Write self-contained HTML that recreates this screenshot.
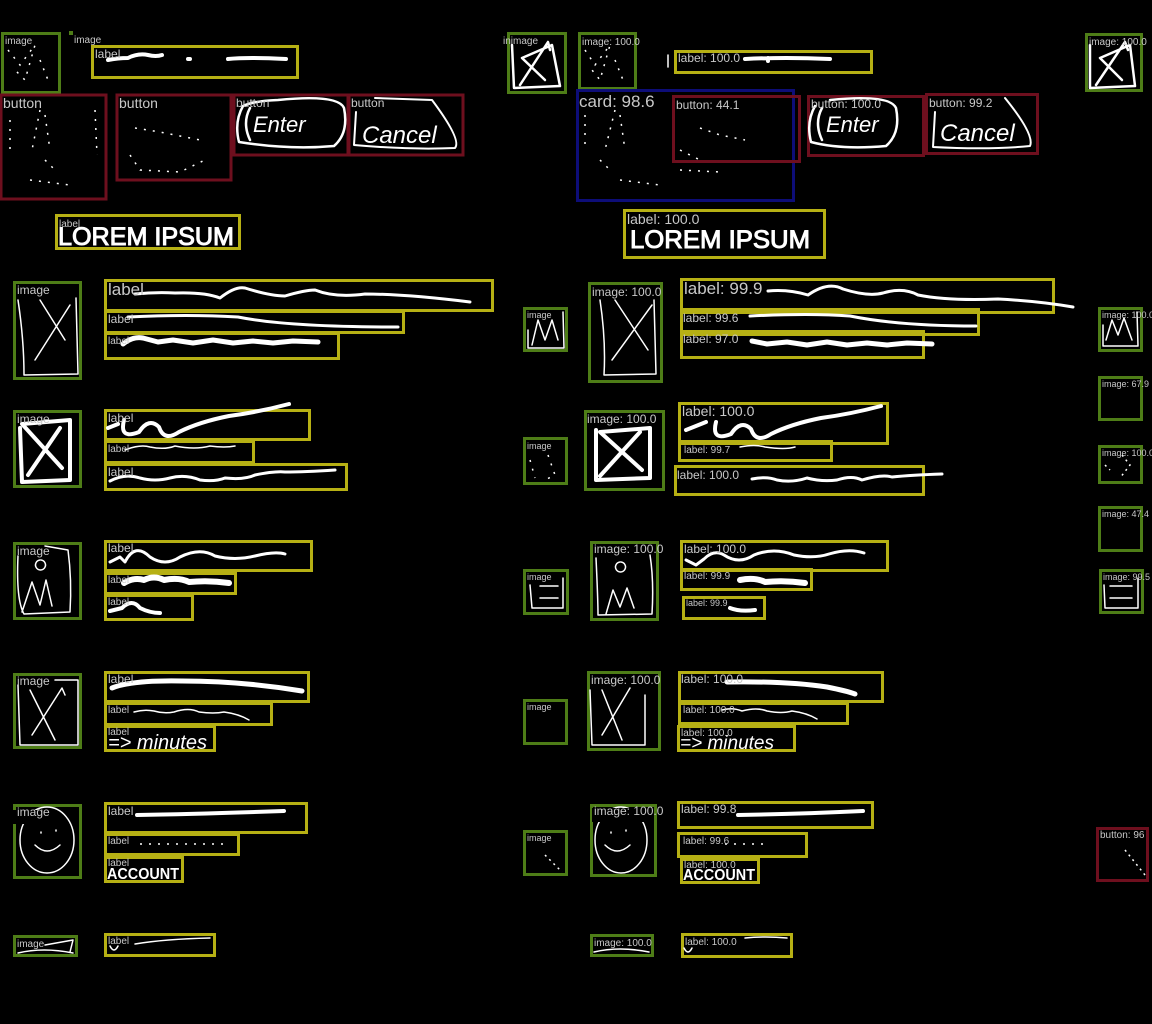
<!DOCTYPE html>
<html><head><meta charset="utf-8"><style>
html,body{margin:0;padding:0;background:#000;width:1152px;height:1024px;overflow:hidden}
svg{display:block}
.g{fill:none;stroke:#4e7d17;stroke-width:3}
.y{fill:none;stroke:#b6b014;stroke-width:3}
.r{fill:none;stroke:#6e0f1e;stroke-width:3}
.b{fill:none;stroke:#0d0d78;stroke-width:3}
.w{fill:none;stroke:#fff;stroke-width:3;stroke-linecap:round;stroke-linejoin:round}
.t{fill:none;stroke:#fff;stroke-width:1.5;stroke-linecap:round;stroke-linejoin:round}
.d{fill:none;stroke:#fff;stroke-width:1.5;stroke-dasharray:2 7}
text{font-family:"Liberation Sans","DejaVu Sans",sans-serif;fill:#c8c8c8}
.s{font-size:10px}.m{font-size:12px}.l{font-size:14px}.xl{font-size:17px}
.hw{font-family:"Liberation Sans",sans-serif;fill:#fff}
.lor{font-family:"Liberation Sans",sans-serif;fill:#fff;stroke:#fff;stroke-width:1;font-size:25px}
</style></head><body>
<svg width="1152" height="1024" viewBox="0 0 1152 1024" xmlns="http://www.w3.org/2000/svg">
<!-- ===== LEFT COLUMN ===== -->
<rect class="g" x="2.5" y="33.5" width="57" height="59"/>
<path class="d" d="M8 50 L20 65 L35 45 L25 80 L15 70 M40 60 L50 85"/>
<text class="s" x="5" y="44">image</text>
<rect x="69" y="31" width="4" height="4" fill="#4e7d17"/>
<text class="s" x="74" y="43">image</text>
<rect class="y" x="92.5" y="46.5" width="205" height="31"/>
<path class="w" d="M108 60 q10 -2 20 -2 q10 -5 20 -3 q8 2 14 0 M188 59 l2 0 M228 59 q20 -2 58 0" style="stroke-width:4"/>
<text class="m" x="95" y="58">label</text>

<rect class="r" x="1" y="95" width="105" height="104"/>
<path class="d" d="M10 120 L10 150 M40 110 L32 150 M45 115 L50 150 M95 110 L97 155 M30 180 L70 185 M45 160 L55 170"/>
<text class="l" x="3" y="108">button</text>
<rect class="r" x="117" y="95" width="114" height="85"/>
<path class="d" d="M135 128 L160 132 L200 140 M130 155 L140 170 L180 172 L205 160"/>
<text class="l" x="119" y="108">button</text>
<rect class="r" x="234" y="95" width="114" height="60"/>
<path class="w" d="M278 100 q60 -6 66 8 q5 25 -10 38 q-45 4 -95 -4 q-5 -20 4 -36 q10 -5 35 -6 M250 108 q-8 15 0 32" style="stroke-width:2.5"/>
<text class="hw" x="253" y="132" style="font-size:22px;font-style:italic">Enter</text>
<text class="m" x="236" y="107">button</text>
<rect class="r" x="349" y="95" width="114" height="60"/>
<path class="t" d="M356 112 L354 145 Q410 150 455 148 Q462 140 432 100 L375 98" style="stroke-width:2"/>
<text x="362" y="143" style="font-size:24px;fill:#fff;font-style:italic">Cancel</text>
<text class="m" x="351" y="107">button</text>

<rect class="y" x="56.5" y="215.5" width="183" height="33"/>
<text class="lor" x="58" y="245" textLength="176" lengthAdjust="spacingAndGlyphs">LOREM IPSUM</text>
<text class="s" x="59" y="227">label</text>

<!-- row 1 -->
<rect class="g" x="14.5" y="282.5" width="66" height="96"/>
<path class="t" d="M18 300 Q24 340 24 375 L78 374 L76 298 M40 300 L65 340 M70 305 L35 360"/>
<text class="m" x="17" y="294">image</text>
<rect class="y" x="105.5" y="280.5" width="387" height="30"/>
<path class="w" d="M135 294 q20 -2 40 -1 q30 -1 45 5 q15 -12 25 -10 q25 8 40 8 q20 -6 30 -6 q20 8 50 4 q40 0 105 8"/>
<text class="xl" x="108" y="295">label</text>
<rect class="y" x="105.5" y="311.5" width="298" height="21"/>
<path class="w" d="M128 317 q60 -3 110 0 q50 10 160 10"/>
<text class="m" x="108" y="323">label</text>
<rect class="y" x="105.5" y="333.5" width="233" height="25"/>
<path class="w" d="M123 344 q10 -8 20 -6 l15 4 l15 -2 l20 3 l20 -3 l20 3 l20 -2 l20 2 l20 -2 l25 1" style="stroke-width:5"/>
<text class="s" x="108" y="344">label</text>

<!-- row 2 -->
<rect class="g" x="14.5" y="411.5" width="66" height="75"/>
<path class="w" d="M20 428 L22 482 L70 480 L70 420 L22 424 L62 468 M60 428 L28 475" style="stroke-width:4"/>
<text class="m" x="17" y="423">image</text>
<rect class="y" x="105.5" y="410.5" width="204" height="29"/>
<path class="w" d="M108 428 l10 -4 M124 420 q-5 20 15 12 q10 -15 20 -5 q5 15 20 5 q20 -10 50 -16 q30 -4 60 -12" style="stroke-width:4"/>
<text class="m" x="108" y="422">label</text>
<rect class="y" x="105.5" y="441.5" width="148" height="21"/>
<path class="t" d="M125 450 q15 -6 25 -3 q15 3 25 -1 q20 4 35 0 q15 2 25 0"/>
<text class="s" x="108" y="452">label</text>
<rect class="y" x="105.5" y="464.5" width="241" height="25"/>
<path class="w" d="M110 481 q15 -8 30 -3 q15 4 30 0 q15 -4 30 2 q15 2 25 -2 q20 2 30 -3 q20 -4 30 -3 q20 0 50 -2"/>
<text class="m" x="108" y="476">label</text>

<!-- row 3 -->
<rect class="g" x="14.5" y="543.5" width="66" height="75"/>
<path class="t" d="M18 556 Q16 600 24 614 L70 612 Q72 580 68 550 L45 546 M22 612 L32 582 L40 605 L46 580 L52 606 M40 560 a5 5 0 1 0 1 0"/>
<text class="m" x="17" y="555">image</text>
<rect class="y" x="105.5" y="541.5" width="206" height="29"/>
<path class="w" d="M110 562 l10 -5 l5 5 q10 -20 25 -5 q15 10 30 0 q20 -10 35 -1 q20 5 40 0 q20 -5 30 -2"/>
<text class="m" x="108" y="552">label</text>
<rect class="y" x="105.5" y="573.5" width="130" height="20"/>
<path class="w" d="M124 583 q10 -6 20 -3 q10 -5 20 0 q15 -3 25 2 q20 -2 40 1" style="stroke-width:6"/>
<text class="s" x="108" y="583">label</text>
<rect class="y" x="105.5" y="595.5" width="87" height="24"/>
<path class="w" d="M110 611 l12 -3 q10 -10 18 0 q10 5 20 5" style="stroke-width:4"/>
<text class="s" x="108" y="605">label</text>

<!-- row 4 -->
<rect class="g" x="14.5" y="674.5" width="66" height="73"/>
<path class="t" d="M18 685 L20 745 L78 745 L78 680 L55 680 M30 690 L55 740 M32 735 L62 688 L65 695"/>
<text class="m" x="17" y="685">image</text>
<rect class="y" x="105.5" y="672.5" width="203" height="29"/>
<path class="w" d="M112 688 q20 -8 70 -7 q60 0 120 10" style="stroke-width:5"/>
<text class="m" x="108" y="683">label</text>
<rect class="y" x="105.5" y="703.5" width="166" height="21"/>
<path class="t" d="M134 712 q10 -3 20 -1 q10 3 20 1 q15 -5 25 0 q15 2 25 0 q15 2 25 8"/>
<text class="s" x="108" y="713">label</text>
<rect class="y" x="105.5" y="726.5" width="109" height="24"/>
<text x="108" y="749" style="font-size:20px;fill:#fff;font-style:italic">=&gt; minutes</text>
<text class="s" x="108" y="735">label</text>

<!-- row 5 -->
<rect class="g" x="14.5" y="805.5" width="66" height="72"/>
<ellipse class="t" cx="47" cy="840" rx="27" ry="33"/>
<rect x="10" y="810" width="45" height="14" fill="#000"/>
<path class="t" d="M35 845 q12 12 25 0 M41 832 l0 1 M56 830 l0 1"/>
<text class="m" x="17" y="816">image</text>
<rect class="y" x="105.5" y="803.5" width="201" height="29"/>
<path class="w" d="M137 815 q60 -1 147 -4" style="stroke-width:4"/>
<text class="m" x="108" y="815">label</text>
<rect class="y" x="105.5" y="834.5" width="133" height="20"/>
<path class="d" d="M140 844 L230 844"/>
<text class="s" x="108" y="844">label</text>
<rect class="y" x="105.5" y="857.5" width="77" height="24"/>
<text x="107" y="879" style="font-size:16px;fill:#fff;font-weight:bold" textLength="72" lengthAdjust="spacingAndGlyphs">ACCOUNT</text>
<text class="s" x="108" y="866">label</text>

<!-- row 6 -->
<rect class="g" x="14.5" y="936.5" width="62" height="19"/>
<path class="t" d="M18 953 q25 -6 55 0 M45 945 L73 940 L70 952"/>
<text class="s" x="17" y="947">image</text>
<rect class="y" x="105.5" y="934.5" width="109" height="21"/>
<path class="t" d="M110 946 q4 8 8 0 M135 944 q30 -5 75 -6"/>
<text class="s" x="108" y="944">label</text>

<!-- ===== MIDDLE SMALL COLUMN ===== -->
<rect class="g" x="508.5" y="33.5" width="57" height="59"/>
<path class="w" d="M512 45 L514 88 L560 86 L552 45 L522 58 L545 80 M520 85 L548 42 L550 50" style="stroke-width:2.5"/>
<text class="s" x="503" y="44">inimage</text>
<rect class="g" x="524.5" y="308.5" width="42" height="42"/>
<path class="t" d="M528 330 L528 348 L564 348 L563 312 M532 345 L538 320 L545 340 L552 320 L558 340"/>
<text class="s" x="527" y="318" style="font-size:9px">image</text>
<rect class="g" x="524.5" y="438.5" width="42" height="45"/>
<path class="d" d="M530 460 L535 478 M548 455 L555 475 L545 480"/>
<text class="s" x="527" y="449" style="font-size:9px">image</text>
<rect class="g" x="524.5" y="570.5" width="43" height="43"/>
<path class="t" d="M530 585 L532 608 L563 608 L563 578 M540 598 L558 598 M540 586 L558 586"/>
<text class="s" x="527" y="580" style="font-size:9px">image</text>
<rect class="g" x="524.5" y="700.5" width="42" height="43"/>
<text class="s" x="527" y="710" style="font-size:9px">image</text>
<rect class="g" x="524.5" y="831.5" width="42" height="43"/>
<path class="d" d="M545 855 L562 872" style="stroke-dasharray:2 4"/>
<text class="s" x="527" y="841" style="font-size:9px">image</text>

<!-- ===== RIGHT COLUMN ===== -->
<rect class="g" x="579.5" y="33.5" width="56" height="55"/>
<path class="d" d="M585 50 L595 65 L610 45 L600 80 L592 70 M615 60 L625 85"/>
<text class="s" x="582" y="45">image: 100.0</text>
<rect class="y" x="675.5" y="51.5" width="196" height="21"/>
<path class="w" d="M768 58 l0 3 M745 59 q40 -2 85 0" style="stroke-width:4"/>
<path class="t" d="M668 55 l0 12"/>
<text class="m" x="678" y="62">label: 100.0</text>

<rect class="b" x="577.5" y="90.5" width="216" height="110"/>
<path class="d" d="M585 115 L585 150 M615 110 L605 150 M620 115 L625 150 M620 180 L660 185 M600 160 L610 170"/>
<text class="xl" x="579" y="107">card: 98.6</text>
<rect class="r" x="673.5" y="96.5" width="126" height="65"/>
<path class="d" d="M700 128 L720 135 L745 140 M680 150 L700 160 M680 170 L720 172"/>
<text class="m" x="676" y="109">button: 44.1</text>
<rect class="r" x="808.5" y="96.5" width="115" height="59"/>
<path class="w" d="M830 100 q60 -6 66 8 q5 25 -10 38 q-45 4 -75 -4 q-5 -20 4 -36 M822 108 q-8 15 0 32" style="stroke-width:2.5"/>
<text class="hw" x="826" y="132" style="font-size:22px;font-style:italic">Enter</text>
<text class="m" x="811" y="108">button: 100.0</text>
<rect class="r" x="926.5" y="94.5" width="111" height="59"/>
<path class="t" d="M935 112 L933 147 Q990 150 1030 146 Q1035 135 1005 98" style="stroke-width:2"/>
<text x="940" y="141" style="font-size:24px;fill:#fff;font-style:italic">Cancel</text>
<text class="m" x="929" y="107">button: 99.2</text>

<rect class="y" x="624.5" y="210.5" width="200" height="47"/>
<text class="lor" x="630" y="248" textLength="180" lengthAdjust="spacingAndGlyphs">LOREM IPSUM</text>
<text class="l" x="627" y="224">label: 100.0</text>

<!-- row 1 -->
<rect class="g" x="589.5" y="283.5" width="72" height="98"/>
<path class="t" d="M600 300 Q606 340 604 375 L656 374 L654 300 M615 300 L648 350 M652 305 L612 360"/>
<text class="m" x="592" y="296">image: 100.0</text>
<rect class="y" x="681.5" y="279.5" width="372" height="33"/>
<path class="w" d="M768 291 q20 -2 40 4 q20 -14 35 -6 q25 8 40 4 q20 -6 35 2 q30 6 80 4 q40 2 75 8"/>
<text class="xl" x="684" y="294">label: 99.9</text>
<rect class="y" x="681.5" y="309.5" width="297" height="25"/>
<path class="w" d="M750 316 q60 -3 100 0 q50 10 126 10"/>
<text class="m" x="683" y="322">label: 99.6</text>
<rect class="y" x="681.5" y="331.5" width="242" height="26"/>
<path class="w" d="M752 341 l15 3 l20 -2 l20 3 l20 -3 l20 3 l20 -2 l20 2 l20 -2 l25 1" style="stroke-width:5"/>
<text class="m" x="683" y="343">label: 97.0</text>

<!-- row 2 -->
<rect class="g" x="585.5" y="411.5" width="78" height="78"/>
<path class="w" d="M596 430 L596 480 L650 478 L650 428 L600 432 L642 470 M640 432 L600 476" style="stroke-width:4"/>
<text class="m" x="587" y="423">image: 100.0</text>
<rect class="y" x="679.5" y="403.5" width="208" height="40"/>
<path class="w" d="M686 430 l20 -8 M716 422 q-5 20 15 12 q10 -15 20 -5 q5 15 20 5 q20 -10 50 -16 q30 -4 60 -12" style="stroke-width:4"/>
<text class="l" x="682" y="416">label: 100.0</text>
<rect class="y" x="679.5" y="441.5" width="152" height="19"/>
<path class="t" d="M740 447 q15 -3 25 0 q20 3 30 0"/>
<text class="s" x="684" y="453">label: 99.7</text>
<rect class="y" x="675.5" y="466.5" width="248" height="28"/>
<path class="w" d="M752 479 q15 -3 25 1 q15 3 30 -2 q15 4 30 2 q15 -5 25 0 q20 -6 30 -3 q20 -2 50 -3"/>
<text class="m" x="677" y="479">label: 100.0</text>

<!-- row 3 -->
<rect class="g" x="591.5" y="542.5" width="66" height="77"/>
<path class="t" d="M596 558 Q598 600 598 615 L652 614 Q654 580 650 555 M606 614 L613 590 L620 607 L627 588 L634 608 M620 562 a5 5 0 1 0 1 0"/>
<text class="m" x="594" y="553">image: 100.0</text>
<rect class="y" x="681.5" y="541.5" width="206" height="29"/>
<path class="w" d="M686 560 l10 5 l8 -6 q10 -10 20 -4 q15 10 30 0 q20 -8 40 0 q20 4 35 -1 q20 -6 35 -1"/>
<text class="m" x="684" y="553">label: 100.0</text>
<rect class="y" x="681.5" y="569.5" width="130" height="20"/>
<path class="w" d="M740 580 q15 -3 25 2 q20 -2 40 1" style="stroke-width:6"/>
<text class="s" x="684" y="579">label: 99.9</text>
<rect class="y" x="683.5" y="597.5" width="81" height="21"/>
<path class="w" d="M730 608 q10 4 25 2" style="stroke-width:4"/>
<text class="s" x="686" y="606" style="font-size:9px">label: 99.9</text>

<!-- row 4 -->
<rect class="g" x="588.5" y="672.5" width="71" height="77"/>
<path class="t" d="M590 690 L592 745 L645 745 L645 695 M602 690 L622 740 M602 735 L630 688"/>
<text class="m" x="591" y="684">image: 100.0</text>
<rect class="y" x="679.5" y="672.5" width="203" height="29"/>
<path class="w" d="M727 682 q60 -1 100 5 q20 4 28 7" style="stroke-width:5"/>
<text class="m" x="681" y="683">label: 100.0</text>
<rect class="y" x="679.5" y="703.5" width="168" height="20"/>
<path class="t" d="M722 710 q10 -3 20 1 q15 -4 25 0 q15 3 25 0 q15 2 25 8"/>
<text class="s" x="683" y="713">label: 100.0</text>
<rect class="y" x="678.5" y="726.5" width="116" height="24"/>
<text x="680" y="749" style="font-size:19px;fill:#fff;font-style:italic">=&gt; minutes</text>
<text class="s" x="681" y="736">label: 100.0</text>

<!-- row 5 -->
<rect class="g" x="591.5" y="805.5" width="64" height="70"/>
<ellipse class="t" cx="621" cy="840" rx="26" ry="33"/>
<rect x="592" y="808" width="62" height="14" fill="#000"/>
<path class="t" d="M605 845 q12 12 25 0 M611 832 l0 1 M626 830 l0 1"/>
<text class="m" x="594" y="815">image: 100.0</text>
<rect class="y" x="678.5" y="802.5" width="194" height="25"/>
<path class="w" d="M738 815 q60 -1 125 -4" style="stroke-width:4"/>
<text class="m" x="681" y="813">label: 99.8</text>
<rect class="y" x="678.5" y="833.5" width="128" height="23"/>
<path class="d" d="M725 844 L770 844"/>
<text class="s" x="683" y="844">label: 99.6</text>
<rect class="y" x="681.5" y="859.5" width="77" height="23"/>
<text x="683" y="880" style="font-size:16px;fill:#fff;font-weight:bold" textLength="72" lengthAdjust="spacingAndGlyphs">ACCOUNT</text>
<text class="s" x="684" y="868">label: 100.0</text>

<!-- row 6 -->
<rect class="g" x="591.5" y="935.5" width="61" height="20"/>
<path class="t" d="M594 952 q25 -6 55 0"/>
<text class="s" x="594" y="946">image: 100.0</text>
<rect class="y" x="682.5" y="934.5" width="109" height="22"/>
<path class="t" d="M684 948 q4 8 8 0 M745 938 q20 -2 42 0"/>
<text class="s" x="685" y="945">label: 100.0</text>

<!-- ===== FAR RIGHT ===== -->
<rect class="g" x="1086.5" y="34.5" width="55" height="56"/>
<path class="w" d="M1090 45 L1090 88 L1135 86 L1130 45 L1100 58 L1122 80 M1096 85 L1125 42 L1128 50" style="stroke-width:2.5"/>
<text class="s" x="1089" y="45">image: 100.0</text>
<rect class="g" x="1099.5" y="308.5" width="42" height="42"/>
<path class="t" d="M1103 325 L1103 346 L1138 346 L1137 312 M1106 340 L1112 320 L1118 335 L1124 318 L1132 340"/>
<text class="s" x="1102" y="318" style="font-size:9px">image: 100.0</text>
<rect class="g" x="1099.5" y="377.5" width="42" height="42"/>
<text class="s" x="1102" y="387" style="font-size:9px">image: 67.9</text>
<rect class="g" x="1099.5" y="446.5" width="42" height="36"/>
<path class="d" d="M1105 465 L1110 470 M1122 455 L1130 465 L1120 478" style="stroke-dasharray:2 4"/>
<text class="s" x="1102" y="456" style="font-size:9px">image: 100.0</text>
<rect class="g" x="1099.5" y="507.5" width="42" height="43"/>
<text class="s" x="1102" y="517" style="font-size:9px">image: 47.4</text>
<rect class="g" x="1100.5" y="570.5" width="42" height="42"/>
<path class="t" d="M1104 585 L1105 608 L1138 608 L1138 578 M1110 598 L1132 598 M1110 586 L1132 586"/>
<text class="s" x="1103" y="580" style="font-size:9px">image: 99.5</text>
<rect class="r" x="1097.5" y="828.5" width="50" height="52"/>
<path class="d" d="M1125 850 L1145 875" style="stroke-dasharray:2 4"/>
<text class="s" x="1100" y="838">button: 96</text>
</svg>
</body></html>
